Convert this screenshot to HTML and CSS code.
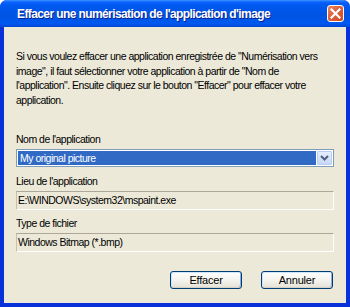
FILE: index.html
```html
<!DOCTYPE html>
<html lang="fr">
<head>
  <meta charset="UTF-8" />
  <title>Effacer une numérisation de l'application d'image</title>
  <link rel="stylesheet" href="styles.css">
</head>
<body>
  <div class="window">
    <div class="titlebar">
      <span class="title">Effacer une numérisation de l'application d'image</span>
      <button class="close-btn" aria-label="Fermer">
        <svg width="11" height="11" viewBox="0 0 11 11">
          <path d="M1.5 1.5 L9.5 9.5 M9.5 1.5 L1.5 9.5" stroke="#fff" stroke-width="2.2" stroke-linecap="square" />
        </svg>
      </button>
    </div>

    <div class="content">
      <p class="intro">
        Si vous voulez effacer une application enregistrée de "Numérisation vers<br>
        image", il faut sélectionner votre application à partir de "Nom de<br>
        l'application". Ensuite cliquez sur le bouton "Effacer" pour effacer votre<br>
        application.
      </p>

      <div class="field-group first">
        <label class="field-label">Nom de l'application</label>
        <div class="combo">
          <span class="combo-value">My original picture</span>
          <span class="combo-arrow">
            <svg width="9" height="6" viewBox="0 0 9 6">
              <path d="M1 1 L4.5 4.5 L8 1" fill="none" stroke="#4d6185" stroke-width="2" />
            </svg>
          </span>
        </div>
      </div>

      <div class="field-group">
        <label class="field-label">Lieu de l'application</label>
        <div class="readonly">E:\WINDOWS\system32\mspaint.exe</div>
      </div>

      <div class="field-group">
        <label class="field-label">Type de fichier</label>
        <div class="readonly">Windows Bitmap (*.bmp)</div>
      </div>

      <div class="actions">
        <button class="xp-btn">Effacer</button>
        <button class="xp-btn">Annuler</button>
      </div>
    </div>
  </div>
</body>
</html>
```

FILE: styles.css
```css
* {
  margin: 0;
  padding: 0;
  box-sizing: border-box;
}

body {
  font-family: 'Liberation Sans', Arial, sans-serif;
  font-size: 10.5px;
  letter-spacing: -0.5px;
  color: #000;
  background: #fff;
}

.window {
  width: 350px;
  height: 307px;
  display: flex;
  flex-direction: column;
  background: #0831d9;
  border-radius: 7px 7px 0 0;
  overflow: hidden;
}

.titlebar {
  height: 27px;
  display: flex;
  align-items: center;
  justify-content: space-between;
  padding: 0 6px 0 17px;
  background: linear-gradient(to bottom, #3d95ff 0%, #0a61ff 8%, #0058ee 20%, #0054e3 60%, #0058f0 88%, #0046d0 100%);
}

.title {
  color: #fff;
  font-weight: bold;
  font-size: 12px;
  letter-spacing: -0.6px;
  text-shadow: 1px 1px 0 #0a1f8a;
}

.close-btn {
  width: 17px;
  height: 17px;
  border: 1px solid #fff;
  border-radius: 3px;
  background: linear-gradient(135deg, #e8896a 0%, #e0623f 40%, #cc4a24 100%);
  display: flex;
  align-items: center;
  justify-content: center;
}

.content {
  flex: 1;
  margin: 0 4px 4px 4px;
  background: #ece9d8;
  padding: 22px 12px 0 12px;
  display: flex;
  flex-direction: column;
}

.intro {
  line-height: 14.7px;
  white-space: nowrap;
}

.field-group {
  display: flex;
  flex-direction: column;
  margin-top: 6px;
}

.field-group.first {
  margin-top: 24px;
}

.field-group.first + .field-group {
  margin-top: 7px;
}

.field-label {
  line-height: 14px;
  margin-bottom: 3px;
}

.combo {
  height: 18px;
  width: 318px;
  border: 1px solid #7f9db9;
  background: #fff;
  display: flex;
  padding: 1px;
}

.combo-value {
  flex: 1;
  background: #316ac5;
  color: #fff;
  padding-left: 2px;
  line-height: 14px;
}

.combo-arrow {
  width: 15px;
  margin-left: 1px;
  background: linear-gradient(to bottom, #e6eefc, #c7d7f6);
  border: 1px solid #bccdf2;
  border-radius: 1px;
  display: flex;
  align-items: center;
  justify-content: center;
}

.readonly {
  height: 19px;
  width: 318px;
  border-top: 1px solid #aca899;
  border-left: 1px solid #c5c2b2;
  border-right: 1px solid #fff;
  border-bottom: 1px solid #fff;
  padding-left: 1px;
  line-height: 16px;
}

.actions {
  display: flex;
  justify-content: flex-end;
  gap: 19px;
  margin-top: 19px;
  padding-right: 1px;
}

.xp-btn {
  width: 72px;
  height: 18px;
  font-family: inherit;
  font-size: 11px;
  letter-spacing: -0.2px;
  color: #000;
  background: linear-gradient(to bottom, #ffffff 0%, #f4f3ee 50%, #e3e1d6 100%);
  border: 1px solid #003c74;
  border-radius: 3px;
  box-shadow: inset 0 -1px 0 #d6d0c5, inset 1px 1px 0 #cee7ff, inset -1px -1px 0 #89ade4;
}
```
